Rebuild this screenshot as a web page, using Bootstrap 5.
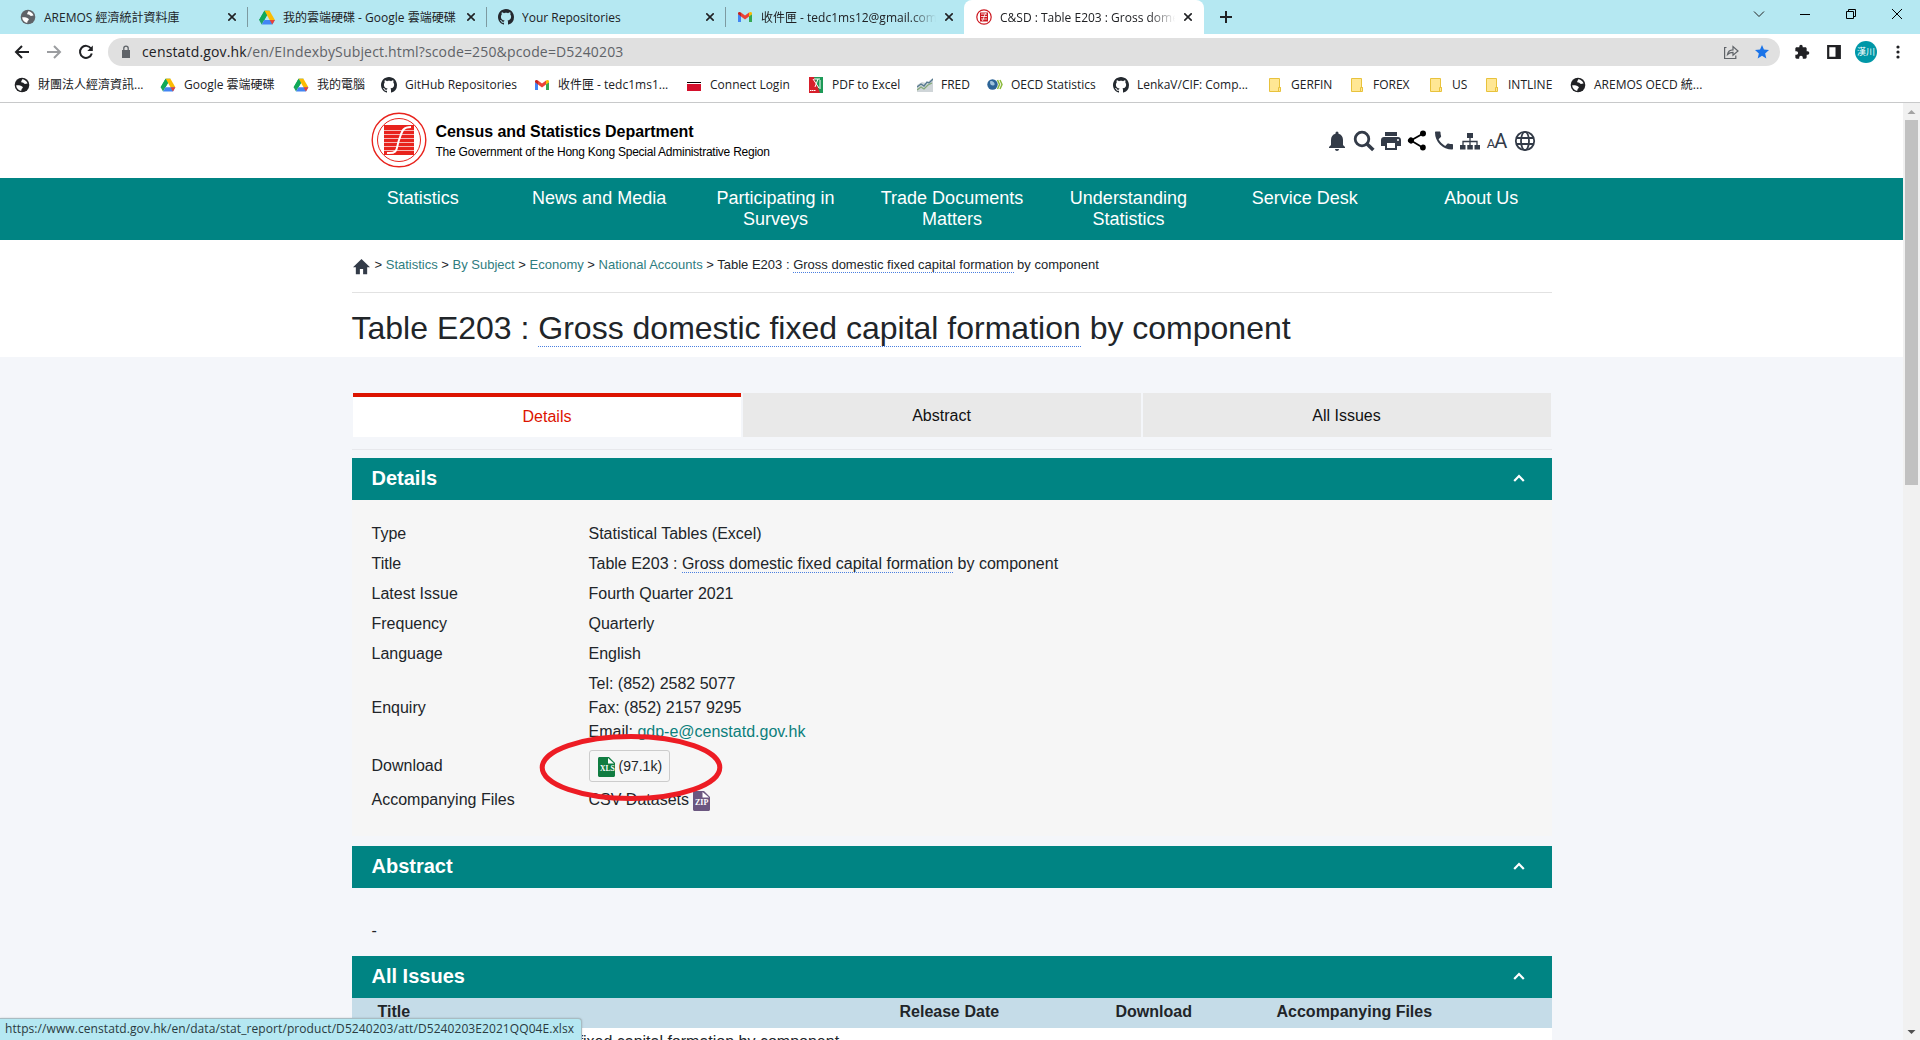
<!DOCTYPE html>
<html lang="en">
<head>
<meta charset="utf-8">
<title>C&amp;SD : Table E203 : Gross domestic fixed capital formation by component</title>
<link href="https://cdn.jsdelivr.net/npm/bootstrap@5.3.0/dist/css/bootstrap.min.css" rel="stylesheet">
<script src="https://cdn.jsdelivr.net/npm/bootstrap@5.3.0/dist/js/bootstrap.bundle.min.js"></script>
<style>
html,body{height:1040px;overflow:hidden}
body{background:#f4f6fa;font-family:"Liberation Sans",Arial,sans-serif;font-size:16px;color:#212529;line-height:24px}
svg{display:block;flex:none}
.chrome{font-family:"Open Sans","Noto Sans CJK TC",sans-serif;font-size:12px;letter-spacing:0;line-height:16px;color:#202124;background:#fff;height:103px;border-bottom:1px solid #c8c9ca;white-space:nowrap}
.tabstrip{height:34px;background:#b5e8f2;padding-left:8px}
.btab{width:239px;padding:0 11px 0 12px}
.btab .tt{width:177px;margin-left:8px;overflow:hidden;padding-top:1px}
.btab .faded{-webkit-mask-image:linear-gradient(90deg,#000 84%,transparent 99%);mask-image:linear-gradient(90deg,#000 84%,transparent 99%)}
.btab+.btab:not(.cur){background:linear-gradient(#7d9aa1,#7d9aa1) 0 7px/1px 20px no-repeat}
.btab.cur{background:#fff;border-radius:8px 8px 0 0;width:240px;padding-right:12px}
.toolbar{height:36px}
.omni{height:28px;width:1672px;border-radius:14px;background:#e0e0e0;font-size:14px;letter-spacing:.16px;color:#5f6368}
.bm{height:30px;padding-left:14px}
.bm>div{display:flex;align-items:center;gap:8px;flex:none}
.ava{width:22px;height:22px;border-radius:50%;background:#0097a7;color:#fff;font-size:9px;line-height:22px;text-align:center;letter-spacing:0}
.page{width:1903px;height:937px;overflow:hidden}
.wrap{width:1200px;margin:0 auto}
.site-head{height:75px;background:#fff}
.dept{font-size:16px;font-weight:700;line-height:20px;color:#000;letter-spacing:-.05px}
.gov{font-size:12px;line-height:20px;color:#000;letter-spacing:-.24px}
.mainnav{height:62px;background:#008483}
.mainnav .cols{width:1236px;margin:0 auto;font-size:18px;line-height:21px;color:#fff;text-align:center;padding:10px 0 0 1px}
.mainnav .cols div{flex:1 1 0;padding:0 14px}
.top{background:#fff;height:117px}
.crumb{height:53px;padding-bottom:3px;font-size:13px;border-bottom:1px solid #e2e2e2;color:#212529}
.crumb a,.mail{color:#0c7f7c;text-decoration:none}
.crumb a{color:#2f7d80}
h1{font-size:32px;font-weight:400;line-height:38px;margin:0;padding-top:16px}
.gl{border-bottom:1px dotted #4a7fe0}
.ptabs{margin-top:36px;height:44px;padding:0 1px;line-height:24px;text-align:center;color:#111;gap:2px}
.ptabs div{background:#e9e9e9;padding-top:11px}
.ptabs .on{background:#fff;border-top:4px solid #dc1400;color:#dc1400;padding:8px 0 0 1px}
.rule{height:1px;background:#e7e8ec;margin:12px 0 8px}
.sec{height:42px;background:#008483;color:#fff;font-weight:700;font-size:20px;padding:0 27px 2px 20px}
.det{background:#f6f6f6;height:336px;padding:19px 19px 0 20px}
.rowx{display:flex;align-items:center;padding:3px 0}
.rowx .k{width:217px;flex:none}
.dl{border:1px solid #ccc;border-radius:3px;width:81px;height:32px;font-size:14px;padding:0 0 0 8px;gap:4px;display:flex;align-items:center}
.th{height:30px;background:#c5dce8;font-weight:700}
.td1{height:34px;background:#fff;padding:2px 0 0 18px}
.th div{flex:none;padding-top:2px}
.ring{position:absolute;left:538px;top:732px}
.status{position:absolute;left:0;bottom:0;width:582px;height:22px;background:#b5e8f2;border:1px solid #a8bcc2;border-width:1px 1px 0 0;border-radius:0 4px 0 0;font:12px/20px "Open Sans",sans-serif;letter-spacing:.08px;color:#2a3a40;padding-left:5px;white-space:nowrap;box-shadow:0 0 2px #0003}
.sbar{width:17px;height:937px;background:#f1f1f1}
.thumb{width:13px;height:365px;background:#c1c1c1;margin:0 auto auto}
</style>
</head>
<body>
<svg width="0" height="0" class="position-absolute">
<symbol id="globe" viewBox="0 0 16 16"><circle cx="8" cy="8" r="7.3" fill="currentColor"/><path d="M8.2 2.2c2 .1 4.600 1.500 5.400 4.300-1.300 0-1.600.6-2.800.4C9.700 6.700 9.900 5.300 8.200 5.500 6.900 5.700 7 4.500 7.600 3.800zM2.200 8.200c1.500.4 2.200-.3 3.600.2 1.300.5 2.900.6 3 1.900.1 1.200-1.300 1-1.500 3.500-2.600-.3-5-2.500-5.100-5.600z" fill="#fff"/></symbol>
<symbol id="drive" viewBox="0 0 16 15"><path d="M5.400.8h5.200L8 5.300z" fill="#188038"/><path d="M5.400.8 8 5.300 2.700 14.500.1 10z" fill="#1ea362"/><path d="M10.600.8 15.900 10h-5.200L5.400.8z" fill="#fbbc04"/><path d="M5.400.8 8 5.300 5.300 10H.1z" fill="#0fa958"/><path d="M5.300 10h10.600l-2.600 4.500H2.700z" fill="#4285f4"/><path d="m15.900 10-2.600 4.500L10.700 10z" fill="#ea4335"/></symbol>
<symbol id="gh" viewBox="0 0 16 16"><path fill="#24292f" d="M8 0C3.580 0 0 3.580 0 8c0 3.540 2.290 6.530 5.470 7.590.4.070.55-.17.55-.38 0-.19-.01-.82-.01-1.490-2.010.37-2.530-.49-2.690-.94-.09-.23-.48-.94-.82-1.130-.28-.15-.68-.52-.01-.53.63-.01 1.080.58 1.230.82.72 1.210 1.870.87 2.330.66.070-.52.28-.87.51-1.070-1.780-.2-3.640-.89-3.640-3.950 0-.87.31-1.590.82-2.150-.08-.2-.36-1.020.08-2.120 0 0 .67-.21 2.200.82.64-.18 1.320-.27 2-.27s1.360.09 2 .27c1.530-1.040 2.200-.82 2.200-.82.44 1.100.16 1.920.08 2.120.51.56.82 1.270.82 2.150 0 3.070-1.870 3.750-3.650 3.950.29.25.54.73.54 1.480 0 1.070-.01 1.930-.01 2.200 0 .21.15.46.55.38A8.010 8.010 0 0 0 16 8c0-4.420-3.580-8-8-8z"/></symbol>
<symbol id="gm" viewBox="0 0 16 16"><path d="M1 13h3V7L1 5z" fill="#4285f4"/><path d="M12 13h3V5l-3 2z" fill="#34a853"/><path d="M4 3.600v4L8 10.500l4-2.900v-4L8 6.600z" fill="#ea4335"/><path d="M1 5.200l3 2.400v-4C2.600 2.500 1 3 1 4.500z" fill="#c5221f"/><path d="M15 5.200l-3 2.400v-4c1.400-1.100 3-.6 3 .9z" fill="#fbbc04"/></symbol>
<symbol id="fold" viewBox="0 0 16 16"><path d="M2.500 1.500h10v9h1v4h-11z" fill="#ffe794" stroke="#e8c23c"/><path d="M11.500 14v-3.500h2V14" fill="#ffe794" stroke="#e8c23c"/></symbol>
<symbol id="cls" viewBox="0 0 8 8"><path d="M.3.300l7.400 7.400M7.700.3.300 7.700" stroke="#202124" stroke-width="1.600"/></symbol>
<symbol id="up" viewBox="0 0 12 10"><path d="M1.200 8 6 3l4.800 5" fill="none" stroke="#fff" stroke-width="2.200"/></symbol>
</svg>

<div class="chrome">
  <div class="tabstrip d-flex">
    <div class="btab d-flex align-items-center" style="color:#3c4043"><svg width="16" height="16" style="color:#5f6368"><use href="#globe"/></svg><span class="tt text-dark">AREMOS 經濟統計資料庫</span><svg class="ms-auto" width="8" height="8"><use href="#cls"/></svg></div>
    <div class="btab d-flex align-items-center"><svg width="16" height="15"><use href="#drive"/></svg><span class="tt">我的雲端硬碟 - Google 雲端硬碟</span><svg class="ms-auto" width="8" height="8"><use href="#cls"/></svg></div>
    <div class="btab d-flex align-items-center"><svg width="16" height="16"><use href="#gh"/></svg><span class="tt">Your Repositories</span><svg class="ms-auto" width="8" height="8"><use href="#cls"/></svg></div>
    <div class="btab d-flex align-items-center"><svg width="16" height="16"><use href="#gm"/></svg><span class="tt faded">收件匣 - tedc1ms12@gmail.com</span><svg class="ms-auto" width="8" height="8"><use href="#cls"/></svg></div>
    <div class="btab cur d-flex align-items-center"><svg width="16" height="16" viewBox="0 0 16 16"><circle cx="8" cy="8" r="7.200" fill="#fff" stroke="#cc1820" stroke-width="1.200"/><path d="M4 3.500h8v9H4z" fill="#cc1820"/><path d="M5 5h6M5 7.500h6M5 10h6M9.500 4 6.500 12" stroke="#fff" stroke-width=".8"/></svg><span class="tt faded">C&amp;SD : Table E203 : Gross dome</span><svg class="ms-auto" width="8" height="8"><use href="#cls"/></svg></div>
    <svg class="align-self-center" style="margin-left:16px" width="12" height="12" viewBox="0 0 12 12"><path d="M6 0v12M0 6h12" stroke="#202124" stroke-width="2"/></svg>
    <div class="ms-auto d-flex" style="padding:7px 16px 0 0;gap:32px">
      <svg width="14" height="14" viewBox="0 0 14 14"><path d="m2 4.500 5 5 5-5" fill="none" stroke="#222"/></svg>
      <svg width="14" height="14" viewBox="0 0 14 14"><path d="M2 7.500h10" stroke="#000"/></svg>
      <svg width="14" height="14" viewBox="0 0 14 14"><path d="M2.500 4.500h7v7h-7zM4.500 4.500v-2h7v7h-2" fill="none" stroke="#000"/></svg>
      <svg width="14" height="14" viewBox="0 0 14 14"><path d="m2 2 10 10M12 2 2 12" stroke="#000"/></svg>
    </div>
  </div>
  <div class="toolbar d-flex align-items-center">
    <svg width="108" height="28" viewBox="0 0 108 28" fill="none" stroke-width="2"><path d="M29 14H16.500M22 8l-6 6 6 6" stroke="#202124"/><path d="M47 14h12.500M54 8l6 6-6 6" stroke="#9b9da0"/><path d="M91 10.500a6 6 0 1 0 .8 5" stroke="#202124"/><path d="M92.800 7.500V13h-5.500z" fill="#202124"/></svg>
    <div class="omni d-flex align-items-center">
      <svg style="margin-left:13px" width="10" height="14" viewBox="0 0 10 14"><path d="M1 5h8v8H1z" fill="#5f6368"/><path d="M2.800 5V3.300a2.200 2.200 0 0 1 4.400 0V5" fill="none" stroke="#5f6368" stroke-width="1.300"/></svg>
      <span style="margin-left:11px"><span style="color:#202124">censtatd.gov.hk</span>/en/EIndexbySubject.html?scode=250&amp;pcode=D5240203</span>
      <svg class="ms-auto" width="16" height="16" viewBox="0 0 16 16" fill="none" stroke="#5f6368" stroke-width="1.200"><path d="M3.500 3.500H1.600v11h11.200v-3"/><path d="M4.500 10.500c.5-3 2.500-4.500 5.500-4.600V2.500L15 7l-5 4.200V8.400c-2.500 0-4 .6-5.500 2.100z"/></svg>
      <svg style="margin:0 11px 0 16px" width="14" height="14" viewBox="0 0 24 24"><path fill="#1a73e8" d="M12 18.300 19.400 23l-2-8.600L24 8.600l-8.700-.7L12 0 8.700 7.900 0 8.600l6.600 5.800L4.600 23z"/></svg>
    </div>
    <svg style="margin-left:14px" width="16" height="16" viewBox="0 0 24 24"><path fill="#202124" d="M20.500 11H19V7c0-1.100-.9-2-2-2h-4V3.500a2.500 2.500 0 0 0-5 0V5H4c-1.100 0-2 .9-2 2v3.800h1.500a2.700 2.700 0 0 1 0 5.400H2V20c0 1.100.9 2 2 2h3.800v-1.500a2.700 2.700 0 0 1 5.400 0V22H17c1.100 0 2-.9 2-2v-4h1.500a2.500 2.500 0 0 0 0-5z"/></svg>
    <svg style="margin-left:17px" width="14" height="14" viewBox="0 0 14 14"><path d="M1.200 1.200h11.600v11.600H1.200z" fill="none" stroke="#202124" stroke-width="2.200"/><path d="M8.500 1H13v12H8.500z" fill="#202124"/></svg>
    <div class="ava" style="margin-left:14px">漢川</div>
    <svg style="margin-left:19px" width="4" height="14" viewBox="0 0 4 14" fill="#202124"><circle cx="2" cy="2" r="1.600"/><circle cx="2" cy="7" r="1.600"/><circle cx="2" cy="12" r="1.600"/></svg>
  </div>
  <div class="bm d-flex">
    <div style="width:146px"><svg width="16" height="16"><use href="#globe"/></svg>財團法人經濟資訊...</div>
    <div style="width:133px"><svg width="16" height="14"><use href="#drive"/></svg>Google 雲端硬碟</div>
    <div style="width:88px"><svg width="16" height="14"><use href="#drive"/></svg>我的電腦</div>
    <div style="width:153px"><svg width="16" height="16"><use href="#gh"/></svg>GitHub Repositories</div>
    <div style="width:152px"><svg width="16" height="16"><use href="#gm"/></svg>收件匣 - tedc1ms1...</div>
    <div style="width:122px"><svg width="16" height="16" viewBox="0 0 16 16"><path d="M1 5.500h14" stroke="#000"/><path d="M1 7h14v7H1z" fill="#d4102c"/></svg>Connect Login</div>
    <div style="width:109px"><svg width="16" height="16" viewBox="0 0 16 16"><path d="M1 0h14v16H1z" fill="#1d9a57"/><path d="M1 0h5l6 16H1z" fill="#d71f2b"/><path d="M5 2l6 9M10 2 7 10M12 3v9M6 2h6" stroke="#fff" fill="none"/><path d="M2 13.500h6" stroke="#fff" stroke-dasharray="1.500 .5"/></svg>PDF to Excel</div>
    <div style="width:70px"><svg width="16" height="16" viewBox="0 0 16 16"><path d="M0 15V8l5-3 4 1 7-5v14z" fill="#cfd5d8"/><path d="M0 10l4-3 3 2 3-4 2 1 4-4" fill="none" stroke="#55798f" stroke-width="1.300"/><path d="M0 13l4-3 3 2 4-4 4-2" fill="none" stroke="#83a878" stroke-width="1.200"/></svg>FRED</div>
    <div style="width:126px"><svg width="16" height="16" viewBox="0 0 16 16"><circle cx="5.500" cy="7.500" r="5.200" fill="#2c6497"/><path d="M3 4.500c2-1.200 3 0 4 1s1 3-1 3-3-1-3-4z" fill="#9fc3dc"/><path d="m10.500 3 2 4.500-2 4.500M13 3l2 4.500-2 4.500" fill="none" stroke="#8cba3c" stroke-width="1.500"/></svg>OECD Statistics</div>
    <div style="width:154px"><svg width="16" height="16"><use href="#gh"/></svg>LenkaV/CIF: Comp...</div>
    <div style="width:82px"><svg width="16" height="16"><use href="#fold"/></svg>GERFIN</div>
    <div style="width:79px"><svg width="16" height="16"><use href="#fold"/></svg>FOREX</div>
    <div style="width:56px"><svg width="16" height="16"><use href="#fold"/></svg>US</div>
    <div style="width:86px"><svg width="16" height="16"><use href="#fold"/></svg>INTLINE</div>
    <div><svg width="16" height="16"><use href="#globe"/></svg>AREMOS OECD 統...</div>
  </div>
</div>

<div class="d-flex">
<div class="page">
  <header class="site-head"><div class="wrap d-flex align-items-center h-100">
    <svg style="margin:0 0 1px 19px" width="56" height="56" viewBox="0 0 56 56"><g fill="none" stroke="#e8231d"><circle cx="28" cy="28" r="26.800" stroke-width="1.400"/><circle cx="28" cy="28" r="21.500"/></g><path d="M13 13h30v30H13z" fill="#e8231d"/><path d="M13 18.500h30M13 22.500h30M13 26.500h30M13 30.500h30M13 34.500h30M13 38.500h30" stroke="#fff" stroke-width=".9" opacity=".75"/><path d="M16 41c12 1 9-5 12-13s3-13 12-13" fill="none" stroke="#fff" stroke-width="2"/></svg>
    <div style="margin:3px 0 0 9px"><div class="dept">Census and Statistics Department</div><div class="gov">The Government of the Hong Kong Special Administrative Region</div></div>
    <div class="ms-auto d-flex align-items-center" style="gap:4.600px;padding:0 16px 0 0;color:#333b48">
      <svg width="22" height="24" viewBox="1 1 22 22" fill="currentColor"><path d="M12 22c1.100 0 2-.9 2-2h-4c0 1.100.9 2 2 2zm6-6v-5c0-3.100-1.600-5.600-4.500-6.300V4a1.500 1.500 0 0 0-3 0v.7C7.600 5.400 6 7.900 6 11v5l-2 2v1h16v-1z"/></svg>
      <svg width="22" height="22" viewBox="0 0 22 22" fill="none" stroke="currentColor"><circle cx="9" cy="9" r="6.800" stroke-width="2.800"/><path d="m13.500 13.500 6.800 6.500" stroke-width="3.600"/></svg>
      <svg width="22" height="24" viewBox="1 1 22 22" fill="currentColor"><path d="M19 8H5c-1.700 0-3 1.300-3 3v6h4v4h12v-4h4v-6c0-1.700-1.300-3-3-3zm-3 11H8v-5h8zm3-7a1 1 0 1 1 0-2 1 1 0 0 1 0 2zm-1-9H6v4h12z"/></svg>
      <svg width="22" height="23" viewBox="1 1 22 22" fill="#000"><path d="M18 16.100c-.8 0-1.400.3-2 .8l-7.100-4.200c0-.2.100-.5.100-.7s0-.5-.1-.7L16 7.200c.5.500 1.200.8 2 .8a3 3 0 1 0-3-3c0 .2 0 .5.100.7L8 9.800a3 3 0 1 0 0 4.400l7.100 4.200c0 .2-.1.400-.1.600a2.900 2.900 0 1 0 3-2.900z"/></svg>
      <svg width="22" height="23" viewBox="1 1 22 22" fill="currentColor"><path d="M6.600 10.800c1.400 2.800 3.800 5.100 6.600 6.600l2.200-2.200c.3-.3.700-.4 1-.2 1.100.4 2.300.6 3.600.6.600 0 1 .4 1 1V20c0 .6-.4 1-1 1A17 17 0 0 1 3 4c0-.6.4-1 1-1h3.500c.6 0 1 .4 1 1 0 1.300.2 2.500.6 3.600.1.400 0 .7-.2 1z"/></svg>
      <svg width="22" height="22" viewBox="0 0 22 22"><path d="M8 3h6v5H8zM1 15h5.500v4.500H1zM8.300 15h5.500v4.500H8.300zM15.500 15H21v4.500h-5.500z" fill="currentColor"/><path d="M4 15v-3.500h14V15M11 8v7" fill="none" stroke="currentColor" stroke-width="1.300"/></svg>
      <span class="d-flex align-items-baseline justify-content-center" style="width:22px;font:400 13px/22px Roboto,sans-serif;padding-top:3px">A<span style="font-size:20px;margin-left:-1px">A</span></span>
      <svg style="margin-left:1px" width="22" height="22" viewBox="0 0 22 22" fill="none" stroke="currentColor" stroke-width="1.800"><circle cx="11" cy="11" r="9.200"/><ellipse cx="11" cy="11" rx="4" ry="9.200"/><path d="M2.500 8h17M2.500 14h17"/></svg>
    </div>
  </div></header>
  <nav class="mainnav"><div class="cols d-flex"><div>Statistics</div><div>News and Media</div><div>Participating in Surveys</div><div>Trade Documents Matters</div><div>Understanding Statistics</div><div>Service Desk</div><div>About Us</div></div></nav>
  <div class="top"><div class="wrap">
    <div class="crumb d-flex align-items-center">
      <svg style="margin:3px 5px 0 1px" width="17" height="17" viewBox="1.500 2 21 19"><path fill="#333b48" d="M10 21v-6.500h4V21h5v-8.500h3.500L12 2.200 1.500 12.500H5V21z"/></svg>
      <div>&gt; <a href="#">Statistics</a> &gt; <a href="#">By Subject</a> &gt; <a href="#">Economy</a> &gt; <a href="#">National Accounts</a> &gt; Table E203 : <span class="gl">Gross domestic fixed capital formation</span> by component</div>
    </div>
    <h1>Table E203 : <span class="gl">Gross domestic fixed capital formation</span> by component</h1>
  </div></div>
  <main class="wrap">
    <div class="ptabs d-flex"><div class="on" style="width:388px">Details</div><div style="width:398px">Abstract</div><div class="flex-fill">All Issues</div></div>
    <div class="rule"></div>
    <div class="sec d-flex align-items-center justify-content-between">Details<svg width="12" height="10"><use href="#up"/></svg></div>
    <div class="det">
      <div class="rowx"><div class="k">Type</div><div>Statistical Tables (Excel)</div></div>
      <div class="rowx"><div class="k">Title</div><div>Table E203 : <span class="gl">Gross domestic fixed capital formation</span> by component</div></div>
      <div class="rowx"><div class="k">Latest Issue</div><div>Fourth Quarter 2021</div></div>
      <div class="rowx"><div class="k">Frequency</div><div>Quarterly</div></div>
      <div class="rowx"><div class="k">Language</div><div>English</div></div>
      <div class="rowx"><div class="k">Enquiry</div><div>Tel: (852) 2582 5077<br>Fax: (852) 2157 9295<br>Email: <a class="mail" href="#">gdp-e@censtatd.gov.hk</a></div></div>
      <div class="rowx"><div class="k">Download</div><div class="dl"><svg style="margin-top:2px" width="17" height="20" viewBox="0 0 17 20"><path d="M1.500 0H11l6 6v12.500c0 .8-.7 1.500-1.500 1.500h-14C.7 20 0 19.300 0 18.500v-17C0 .7.7 0 1.500 0z" fill="#107c41"/><path d="M10 1v5.500h6z" fill="#fff"/><text x="2" y="14" font-family="Liberation Serif" font-size="7.500" font-weight="700" fill="#fff">XLS</text></svg>(97.1k)</div></div>
      <div class="rowx"><div class="k">Accompanying Files</div><div class="d-flex align-items-center" style="gap:4px">CSV Datasets<svg style="margin-top:2px" width="17" height="20" viewBox="0 0 17 20"><path d="M1.500 0H11l6 6v12.500c0 .8-.7 1.500-1.500 1.500h-14C.7 20 0 19.300 0 18.500v-17C0 .7.7 0 1.500 0z" fill="#6b5780"/><path d="M9.500 1v5.500H16z" fill="#fff"/><text x="2" y="14" font-family="Liberation Serif" font-size="8" font-weight="700" fill="#fff">ZIP</text></svg></div></div>
    </div>
    <div class="sec d-flex align-items-center justify-content-between" style="margin-top:10px">Abstract<svg width="12" height="10"><use href="#up"/></svg></div>
    <div style="height:68px;padding:31px 20px 0">-</div>
    <div class="sec d-flex align-items-center justify-content-between">All Issues<svg width="12" height="10"><use href="#up"/></svg></div>
    <div class="th d-flex" style="padding-left:26px"><div style="width:522px">Title</div><div style="width:216px">Release Date</div><div style="width:161px">Download</div><div>Accompanying Files</div></div>
    <div class="td1">Table E203 : Gross domestic fixed capital formation by component</div>
  </main>
</div>
<div class="sbar d-flex flex-column">
  <svg width="17" height="17" viewBox="0 0 17 17"><path d="M4.500 11 8.500 7l4 4z" fill="#a3a3a3"/></svg>
  <div class="thumb"></div>
  <svg width="17" height="17" viewBox="0 0 17 17"><path d="m4.500 7 4 4 4-4z" fill="#505050"/></svg>
</div>
</div>

<svg class="ring" width="186" height="70" viewBox="0 0 186 70"><ellipse cx="93" cy="35.500" rx="88.800" ry="31" fill="none" stroke="#ed1c24" stroke-width="5"/></svg>
<div class="status">https://www.censtatd.gov.hk/en/data/stat_report/product/D5240203/att/D5240203E2021QQ04E.xlsx</div>
</body>
</html>
